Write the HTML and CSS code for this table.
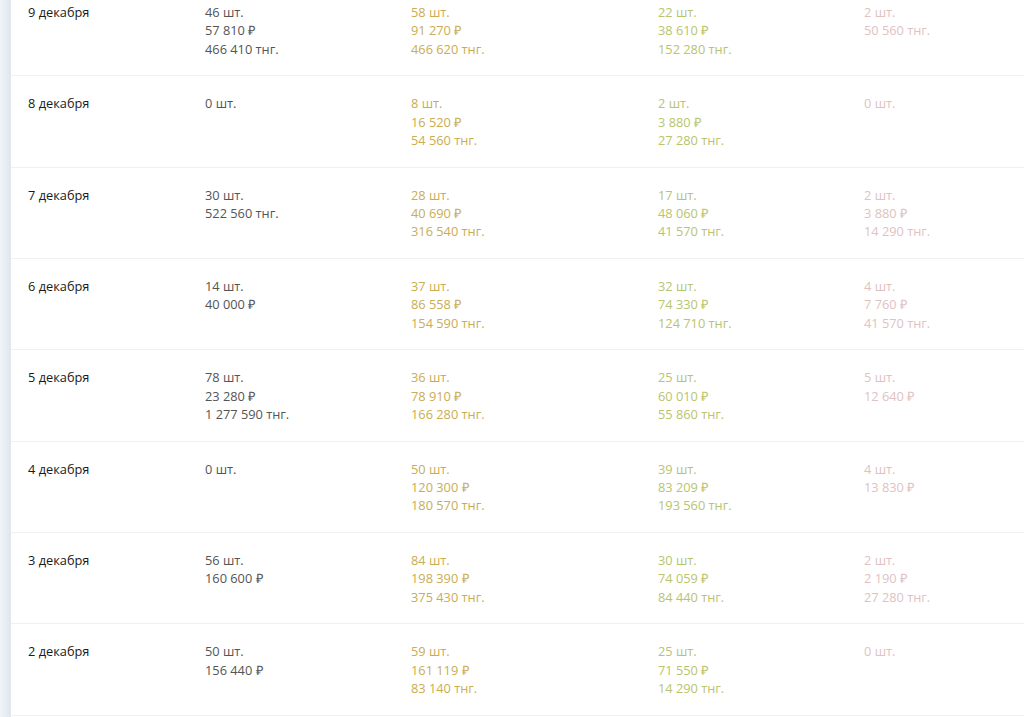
FILE: index.html
```html
<!DOCTYPE html>
<html lang="ru">
<head>
<meta charset="utf-8">
<title>Продажи по дням</title>
<link rel="stylesheet" href="styles.css">
</head>
<body>
<div class="page">
  <div class="side"></div>
  <div class="table">
    <div class="row">
      <div class="date">9 декабря</div>
      <div class="cell c-total"><div>46 шт.</div><div>57 810 ₽</div><div>466 410 тнг.</div></div>
      <div class="cell c-gold"><div>58 шт.</div><div>91 270 ₽</div><div>466 620 тнг.</div></div>
      <div class="cell c-green"><div>22 шт.</div><div>38 610 ₽</div><div>152 280 тнг.</div></div>
      <div class="cell c-pink"><div>2 шт.</div><div>50 560 тнг.</div></div>
    </div>
    <div class="row">
      <div class="date">8 декабря</div>
      <div class="cell c-total"><div>0 шт.</div></div>
      <div class="cell c-gold"><div>8 шт.</div><div>16 520 ₽</div><div>54 560 тнг.</div></div>
      <div class="cell c-green"><div>2 шт.</div><div>3 880 ₽</div><div>27 280 тнг.</div></div>
      <div class="cell c-pink"><div>0 шт.</div></div>
    </div>
    <div class="row">
      <div class="date">7 декабря</div>
      <div class="cell c-total"><div>30 шт.</div><div>522 560 тнг.</div></div>
      <div class="cell c-gold"><div>28 шт.</div><div>40 690 ₽</div><div>316 540 тнг.</div></div>
      <div class="cell c-green"><div>17 шт.</div><div>48 060 ₽</div><div>41 570 тнг.</div></div>
      <div class="cell c-pink"><div>2 шт.</div><div>3 880 ₽</div><div>14 290 тнг.</div></div>
    </div>
    <div class="row">
      <div class="date">6 декабря</div>
      <div class="cell c-total"><div>14 шт.</div><div>40 000 ₽</div></div>
      <div class="cell c-gold"><div>37 шт.</div><div>86 558 ₽</div><div>154 590 тнг.</div></div>
      <div class="cell c-green"><div>32 шт.</div><div>74 330 ₽</div><div>124 710 тнг.</div></div>
      <div class="cell c-pink"><div>4 шт.</div><div>7 760 ₽</div><div>41 570 тнг.</div></div>
    </div>
    <div class="row">
      <div class="date">5 декабря</div>
      <div class="cell c-total"><div>78 шт.</div><div>23 280 ₽</div><div>1 277 590 тнг.</div></div>
      <div class="cell c-gold"><div>36 шт.</div><div>78 910 ₽</div><div>166 280 тнг.</div></div>
      <div class="cell c-green"><div>25 шт.</div><div>60 010 ₽</div><div>55 860 тнг.</div></div>
      <div class="cell c-pink"><div>5 шт.</div><div>12 640 ₽</div></div>
    </div>
    <div class="row">
      <div class="date">4 декабря</div>
      <div class="cell c-total"><div>0 шт.</div></div>
      <div class="cell c-gold"><div>50 шт.</div><div>120 300 ₽</div><div>180 570 тнг.</div></div>
      <div class="cell c-green"><div>39 шт.</div><div>83 209 ₽</div><div>193 560 тнг.</div></div>
      <div class="cell c-pink"><div>4 шт.</div><div>13 830 ₽</div></div>
    </div>
    <div class="row">
      <div class="date">3 декабря</div>
      <div class="cell c-total"><div>56 шт.</div><div>160 600 ₽</div></div>
      <div class="cell c-gold"><div>84 шт.</div><div>198 390 ₽</div><div>375 430 тнг.</div></div>
      <div class="cell c-green"><div>30 шт.</div><div>74 059 ₽</div><div>84 440 тнг.</div></div>
      <div class="cell c-pink"><div>2 шт.</div><div>2 190 ₽</div><div>27 280 тнг.</div></div>
    </div>
    <div class="row">
      <div class="date">2 декабря</div>
      <div class="cell c-total"><div>50 шт.</div><div>156 440 ₽</div></div>
      <div class="cell c-gold"><div>59 шт.</div><div>161 119 ₽</div><div>83 140 тнг.</div></div>
      <div class="cell c-green"><div>25 шт.</div><div>71 550 ₽</div><div>14 290 тнг.</div></div>
      <div class="cell c-pink"><div>0 шт.</div></div>
    </div>
  </div>
</div>
</body>
</html>
```

FILE: styles.css
```css
html, body {
  margin: 0;
  padding: 0;
  background: #ffffff;
  overflow: hidden;
}

body {
  font-family: "Open Sans", "Liberation Sans", sans-serif;
  font-size: 12.8px;
  line-height: 18.4px;
  color: #444;
}

.page {
  display: flex;
  height: 717px;
  overflow: hidden;
}

.side {
  flex: 0 0 10px;
  background: linear-gradient(to right, #f1f4f8 0%, #e6ecf3 70%, #dde5ee 100%);
  border-right: 1px solid #e3e9f0;
}

.table {
  flex: 1;
  margin-top: -15px;
}

.row {
  display: grid;
  grid-template-columns: 177px 206px 247px 206px 1fr;
  padding: 18px 0 17.1px 17px;
  min-height: 55.2px;
  border-bottom: 1px solid #eef0f2;
}

.date {
  color: #1a1a1a;
}

.c-total {
  color: #555555;
}

.c-gold {
  color: #c9ad52;
}

.c-green {
  color: #b9c46e;
}

.c-pink {
  color: #dfc2c2;
}
```
